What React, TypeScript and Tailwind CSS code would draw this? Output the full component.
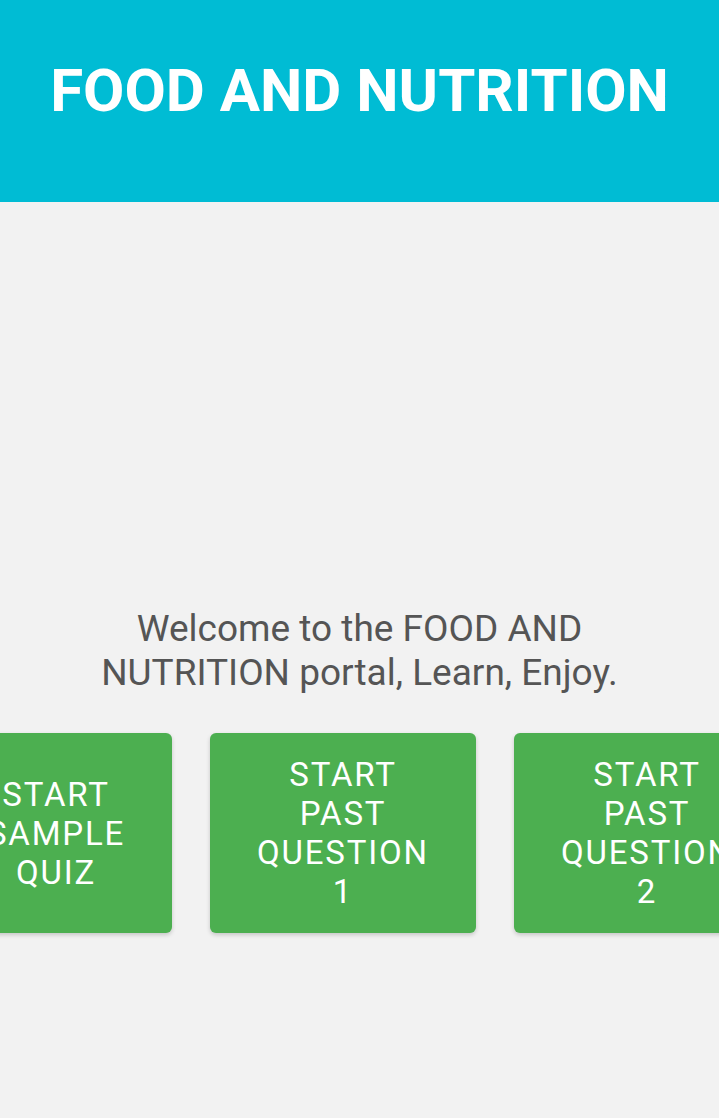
export default function App() {
  return (
    <main className="min-h-screen w-[719px] h-[1118px] overflow-hidden bg-[#f2f2f2] font-['Roboto',sans-serif]">
      <header className="h-[202px] bg-[#00bcd4] flex justify-center pt-[56px]">
        <h1 className="text-white font-bold text-[60px] leading-[70px] whitespace-nowrap">FOOD AND NUTRITION</h1>
      </header>

      <section className="pt-[405px]">
        <p className="text-center text-[#555555] text-[37px] leading-[44px] px-[80px]">
          Welcome to the FOOD AND NUTRITION portal, Learn, Enjoy.
        </p>

        <div className="flex gap-[38px] mt-[38px] ml-[-60px]">
          <button className="shrink-0 w-[232px] h-[200px] rounded-[6px] bg-[#4caf50] shadow-[0_2px_4px_rgba(0,0,0,0.18)] text-white text-[33px] leading-[39px] tracking-[1.8px] flex items-center justify-center text-center">
            START<br />SAMPLE<br />QUIZ
          </button>
          <button className="shrink-0 w-[266px] h-[200px] rounded-[6px] bg-[#4caf50] shadow-[0_2px_4px_rgba(0,0,0,0.18)] text-white text-[33px] leading-[39px] tracking-[1.8px] flex items-center justify-center text-center">
            START<br />PAST<br />QUESTION<br />1
          </button>
          <button className="shrink-0 w-[266px] h-[200px] rounded-[6px] bg-[#4caf50] shadow-[0_2px_4px_rgba(0,0,0,0.18)] text-white text-[33px] leading-[39px] tracking-[1.8px] flex items-center justify-center text-center">
            START<br />PAST<br />QUESTION<br />2
          </button>
        </div>
      </section>
    </main>
  );
}
